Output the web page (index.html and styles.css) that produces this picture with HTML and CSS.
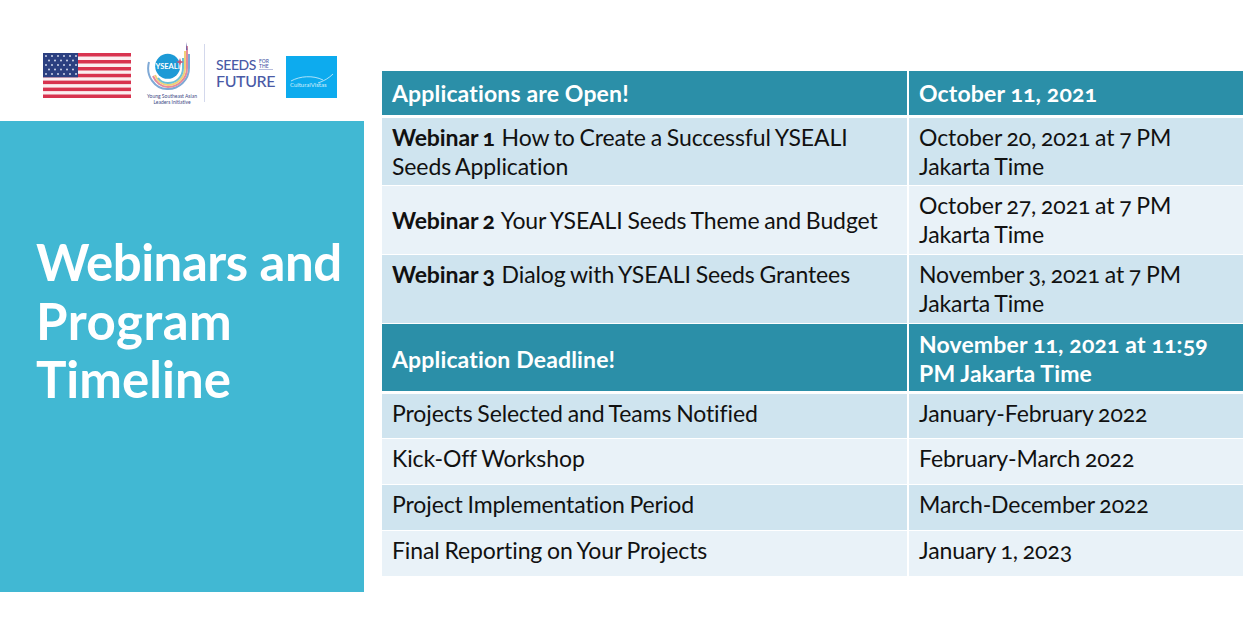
FILE: index.html
```html
<!DOCTYPE html>
<html lang="en">
<head>
  <meta charset="UTF-8">
  <title>Webinars and Program Timeline</title>
  <link rel="stylesheet" href="styles.css">
</head>
<body>
  <div class="slide">
    <div class="side">
      <div class="logos">
        <svg class="flag" viewBox="0 0 88 45" width="88" height="45">
          <rect width="88" height="45" fill="#fbeef0"/>
          <g fill="#d8334f">
            <rect y="0" width="88" height="3.5"/>
            <rect y="7" width="88" height="3.5"/>
            <rect y="14" width="88" height="3.5"/>
            <rect y="20.8" width="88" height="3.5"/>
            <rect y="27.6" width="88" height="3.5"/>
            <rect y="34.6" width="88" height="3.5"/>
            <rect y="41.5" width="88" height="3.5"/>
          </g>
          <rect width="35" height="24.3" fill="#2b3f80"/>
          <g fill="#cfd6ea">
            <circle cx="3" cy="3" r="1"/><circle cx="9" cy="3" r="1"/><circle cx="15" cy="3" r="1"/><circle cx="21" cy="3" r="1"/><circle cx="27" cy="3" r="1"/><circle cx="33" cy="3" r="1"/>
            <circle cx="6" cy="7.5" r="1"/><circle cx="12" cy="7.5" r="1"/><circle cx="18" cy="7.5" r="1"/><circle cx="24" cy="7.5" r="1"/><circle cx="30" cy="7.5" r="1"/>
            <circle cx="3" cy="12" r="1"/><circle cx="9" cy="12" r="1"/><circle cx="15" cy="12" r="1"/><circle cx="21" cy="12" r="1"/><circle cx="27" cy="12" r="1"/><circle cx="33" cy="12" r="1"/>
            <circle cx="6" cy="16.5" r="1"/><circle cx="12" cy="16.5" r="1"/><circle cx="18" cy="16.5" r="1"/><circle cx="24" cy="16.5" r="1"/><circle cx="30" cy="16.5" r="1"/>
            <circle cx="3" cy="21" r="1"/><circle cx="9" cy="21" r="1"/><circle cx="15" cy="21" r="1"/><circle cx="21" cy="21" r="1"/><circle cx="27" cy="21" r="1"/><circle cx="33" cy="21" r="1"/>
          </g>
        </svg>
        <div class="yseali">
          <svg viewBox="0 0 52 50" width="52" height="50">
            <g fill="none" stroke-width="2">
              <path d="M3 20A19 21 0 0 0 22 47C33 47 43 38 43 26L43 12" stroke="#7fa9d6"/>
              <path d="M7 34A17 19 0 0 0 22 45C32 45 41 37 41 26L41 4" stroke="#e58a9c"/>
              <path d="M9 33A15 17 0 0 0 22 43C31 43 39 36 39 26L39 9" stroke="#f0d078"/>
              <path d="M12 36A13 15 0 0 0 22 41C30 41 37 35 37 26L37 16" stroke="#6cc0d4"/>
            </g>
            <path d="M40 8L40.500 0L41.500 8z" fill="#6b63a8"/>
            <circle cx="21.700" cy="24.300" r="12.500" fill="#1c9ad6"/>
            <text class="yseali-name" x="21.700" y="27" text-anchor="middle">YSEALI</text>
            <path d="M30 20l3-1 1-3 1 3 3 1-3 1-1 3-1-3z" fill="#c8577a"/>
          </svg>
          <p class="yseali-sub">Young Southeast Asian<br>Leaders Initiative</p>
        </div>
        <div class="divider"></div>
        <div class="seeds">
          <div class="seeds-top">SEEDS <span class="seeds-small">FOR<br>THE</span></div>
          <div class="seeds-future">FUTURE</div>
        </div>
        <div class="cultural">
          <svg viewBox="0 0 51 42" width="51" height="42">
            <path d="M5 25C14 20 27 19 37 24M32 27C38 25 43 22 47 18" fill="none" stroke="#d6f0fc" stroke-width="0.8"/>
            <text class="cultural-name" x="4" y="31">CulturalVistas</text>
          </svg>
        </div>
      </div>
      <div class="panel">
        <h1><span class="tight">Webinars and</span> <span class="wide">Program</span> <span>Timeline</span></h1>
      </div>
    </div>
    <table class="timeline">
      <colgroup><col class="col-a"><col class="col-b"></colgroup>
      <tr class="head row-44">
        <td>Applications are Open!</td>
        <td>October 11, 2021</td>
      </tr>
      <tr class="dark row-69">
        <td><b>Webinar 1</b> How to Create a Successful YSEALI Seeds Application</td>
        <td>October 20, 2021 at 7 PM Jakarta Time</td>
      </tr>
      <tr class="light row-69">
        <td><b>Webinar 2</b> Your YSEALI Seeds Theme and Budget</td>
        <td>October 27, 2021 at 7 PM Jakarta Time</td>
      </tr>
      <tr class="dark row-69">
        <td class="top"><b>Webinar 3</b> Dialog with YSEALI Seeds Grantees</td>
        <td>November 3, 2021 at 7 PM Jakarta Time</td>
      </tr>
      <tr class="head row-69">
        <td>Application Deadline!</td>
        <td>November 11, 2021 at 11:59 PM Jakarta Time</td>
      </tr>
      <tr class="dark row-46">
        <td>Projects Selected and Teams Notified</td>
        <td>January-February 2022</td>
      </tr>
      <tr class="light row-46">
        <td>Kick-Off Workshop</td>
        <td>February-March 2022</td>
      </tr>
      <tr class="dark row-46">
        <td>Project Implementation Period</td>
        <td>March-December 2022</td>
      </tr>
      <tr class="light row-46">
        <td>Final Reporting on Your Projects</td>
        <td>January 1, 2023</td>
      </tr>
    </table>
  </div>
</body>
</html>
```

FILE: styles.css
```css
html, body {
  margin: 0;
  height: 100%;
  background: #fff;
  overflow: hidden;
}
.slide {
  display: flex;
  height: 617px;
  font-family: Lato, "Open Sans", sans-serif;
  font-variant-ligatures: none;
}
.side {
  width: 364px;
  flex: none;
}
.logos {
  height: 121px;
  box-sizing: border-box;
  padding: 42px 0 0 43px;
  display: flex;
  align-items: flex-start;
}
.flag {
  margin-top: 11px;
  margin-right: 15px;
  flex: none;
}
.yseali {
  width: 52px;
  margin-right: 6px;
  flex: none;
}
.yseali svg {
  display: block;
}
.yseali-name {
  font-size: 7.500px;
  font-weight: 700;
  fill: #fff;
}
.yseali-sub {
  margin: 1px 0 0;
  font-size: 5px;
  line-height: 6px;
  text-align: center;
  white-space: nowrap;
  color: #3d4a86;
}
.divider {
  width: 1px;
  height: 58px;
  margin-top: 2px;
  background: #d3d8ec;
  margin-right: 11px;
  flex: none;
}
.seeds {
  width: 59px;
  margin-top: 15px;
  margin-right: 11px;
  flex: none;
  color: #4a5aa6;
  font-weight: 500;
}
.seeds-top {
  font-size: 14px;
  line-height: 15px;
  letter-spacing: -0.4px;
  display: flex;
  align-items: center;
  gap: 3px;
}
.seeds-small {
  font-size: 5px;
  line-height: 5px;
  letter-spacing: 0;
  padding-right: 4px;
  border-bottom: 1px solid #b5bcdc;
}
.seeds-future {
  font-size: 16px;
  line-height: 17px;
  letter-spacing: -0.4px;
}
.cultural {
  width: 51px;
  height: 42px;
  margin-top: 14px;
  flex: none;
  background: #0dabee;
}
.cultural svg {
  display: block;
}
.cultural-name {
  font-size: 6px;
  fill: #d6f0fc;
}
.panel {
  height: 471px;
  background: #41b8d3;
  box-sizing: border-box;
  padding: 112px 0 0 36px;
}
h1 {
  margin: 0;
  color: #fff;
  font-size: 51px;
  line-height: 58.500px;
  font-weight: 700;
}
h1 span {
  display: block;
}
h1 .tight {
  letter-spacing: -0.5px;
}
h1 .wide {
  letter-spacing: 0.5px;
}
.timeline {
  margin: 70px 0 0 18px;
  width: 861px;
  height: 505px;
  border-collapse: collapse;
  table-layout: fixed;
  align-self: flex-start;
  font-size: 23px;
  line-height: 29px;
  letter-spacing: -0.1px;
  word-spacing: -1px;
  color: #111;
  font-variant-numeric: oldstyle-nums;
}
.timeline b {
  margin-right: 2px;
}
.col-a {
  width: 526px;
}
.timeline td {
  padding: 0 10px;
  border: 1px solid #fff;
  border-width: 1px 2px 1px 0;
  vertical-align: middle;
}
.timeline td:last-child {
  border-right: 0;
}
.timeline td.top {
  vertical-align: top;
  padding-top: 5px;
}
.head td {
  background: #2b8fa8;
  color: #fff;
  font-weight: 700;
  letter-spacing: 0.15px;
  word-spacing: 0;
  border-bottom-width: 3px;
}
.dark td {
  background: #cfe4ef;
}
.light td {
  background: #e9f2f8;
}
.row-44 {
  height: 46px;
}
.row-69 {
  height: 69px;
}
.row-69.head td {
  padding-top: 3px;
}
.row-46 {
  height: 46px;
}
.row-46 td {
  padding-bottom: 6px;
}
```
